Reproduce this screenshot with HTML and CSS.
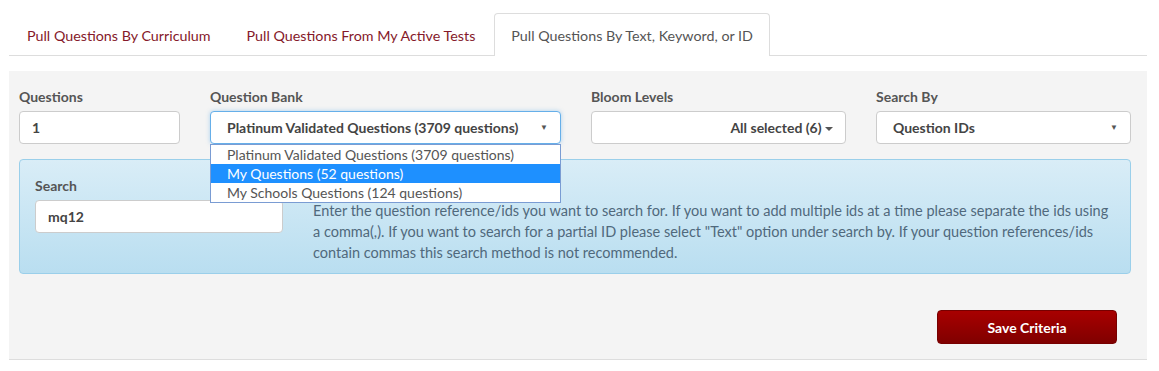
FILE: index.html
```html
<!DOCTYPE html>
<html lang="en">
<head>
    <meta charset="UTF-8">
    <title>Pull Questions</title>
    <link rel="stylesheet" href="styles.css">
</head>
<body>
    <div class="page">
        <ul class="tabs">
            <li class="tab">Pull Questions By Curriculum</li>
            <li class="tab">Pull Questions From My Active Tests</li>
            <li class="tab active">Pull Questions By Text, Keyword, or ID</li>
        </ul>

        <div class="panel">
            <div class="fields">
                <div class="field">
                    <label>Questions</label>
                    <div class="control">1</div>
                </div>
                <div class="field bank">
                    <label>Question Bank</label>
                    <div class="control select focused">
                        <span>Platinum Validated Questions (3709 questions)</span>
                        <span class="arrow">▼</span>
                    </div>
                    <ul class="options">
                        <li>Platinum Validated Questions (3709 questions)</li>
                        <li class="picked">My Questions (52 questions)</li>
                        <li>My Schools Questions (124 questions)</li>
                    </ul>
                </div>
                <div class="field">
                    <label>Bloom Levels</label>
                    <div class="control multi">All selected (6) <span class="caret"></span></div>
                </div>
                <div class="field">
                    <label>Search By</label>
                    <div class="control select">
                        <span>Question IDs</span>
                        <span class="arrow">▼</span>
                    </div>
                </div>
            </div>

            <div class="search-box">
                <div class="search-field">
                    <label>Search</label>
                    <div class="control">mq12</div>
                </div>
                <p class="help">Enter the question reference/ids you want to search for. If you want to add multiple ids at a time please separate the ids using a comma(,). If you want to search for a partial ID please select "Text" option under search by. If your question references/ids contain commas this search method is not recommended.</p>
            </div>

            <div class="actions">
                <button class="save">Save Criteria</button>
            </div>
        </div>
    </div>
</body>
</html>
```

FILE: styles.css
```css
body {
    margin: 0;
    background: #fff;
    font-family: Lato, 'Liberation Sans', sans-serif;
    font-size: 14px;
    color: #555;
}
.page {
    margin: 13px 12px 0 9px;
}
.tabs {
    list-style: none;
    margin: 0;
    padding: 0 0 0 1px;
    display: flex;
    gap: 2px;
    border-bottom: 1px solid #ddd;
}
.tab {
    height: 41px;
    line-height: 43px;
    padding: 0 16px;
    font-size: 14.3px;
    color: #85192a;
    border: 1px solid transparent;
    border-bottom: none;
    border-radius: 4px 4px 0 0;
    margin-bottom: -1px;
}
.tab.active {
    color: #555;
    background: #fff;
    border-color: #ddd;
    height: 42px;
}
.panel {
    margin-top: 15px;
    background: #f4f4f4;
    border-bottom: 1px solid #ddd;
    padding: 17px 16px 15px 10px;
}
.fields {
    display: grid;
    grid-template-columns: 161px 351px 255px 255px;
    column-gap: 30px;
}
.field {
    position: relative;
}
label {
    display: block;
    font-weight: bold;
    font-size: 14px;
    color: #555;
    margin-bottom: 6px;
}
.control {
    height: 31px;
    line-height: 31px;
    background: #fff;
    border: 1px solid #ccc;
    border-radius: 4px;
    padding: 0 12px 0 12px;
    font-weight: bold;
    font-size: 14px;
    color: #444;
    box-sizing: content-box;
}
.select {
    display: flex;
    justify-content: space-between;
    padding-left: 16px;
}
.focused {
    border-color: #66afe9;
    box-shadow: 0 0 4px rgba(102, 175, 233, 0.5);
}
.arrow {
    font-size: 8px;
    color: #555;
}
.multi {
    text-align: right;
}
.caret {
    display: inline-block;
    width: 0;
    height: 0;
    border-left: 4px solid transparent;
    border-right: 4px solid transparent;
    border-top: 4px solid #555;
    vertical-align: middle;
}
.options {
    position: absolute;
    left: 0;
    right: 0;
    top: 56px;
    list-style: none;
    margin: 0;
    padding: 0;
    background: #fff;
    border: 1px solid #7a9cd3;
    z-index: 2;
}
.options li {
    height: 19px;
    line-height: 19px;
    padding-left: 16px;
    font-size: 14px;
    color: #555;
}
.options li.picked {
    background: #1e90ff;
    color: #fff;
}
.search-box {
    margin-top: 15px;
    display: flex;
    gap: 30px;
    background: linear-gradient(#d9edf7, #b9def0);
    border: 1px solid #9acfea;
    border-radius: 4px;
    padding: 17px 16px 10px 15px;
}
.search-field {
    flex: 0 0 248px;
}
.search-field .control {
    padding-left: 12px;
}
.help {
    margin: 23px 0 0 0;
    font-size: 14.5px;
    line-height: 21px;
    color: #50697c;
}
.actions {
    display: flex;
    justify-content: flex-end;
    padding: 36px 14px 0 0;
}
.save {
    width: 180px;
    height: 34px;
    border: 1px solid #700;
    border-radius: 4px;
    background: linear-gradient(#a80000, #800000);
    color: #fff;
    font-family: Lato, 'Liberation Sans', sans-serif;
    font-size: 14px;
    font-weight: bold;
}
```
